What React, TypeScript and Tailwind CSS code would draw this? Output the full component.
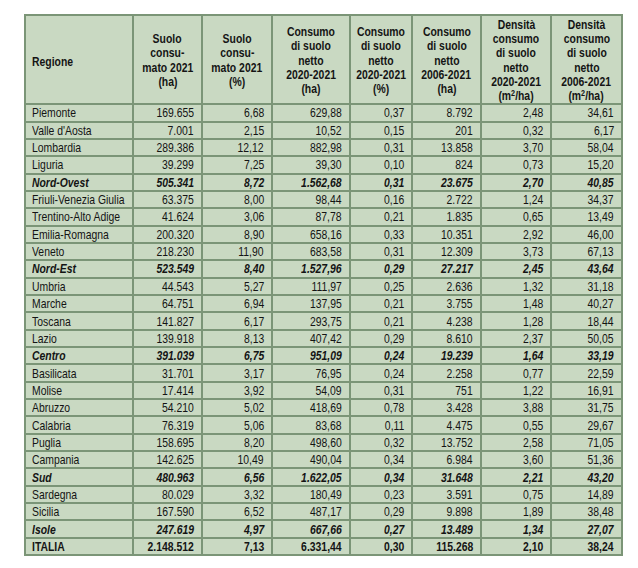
import React from "react";

type Row = { name: string; v: string[]; kind?: "macro" | "total" };

const rows: Row[] = [
  { name: "Piemonte", v: ["169.655", "6,68", "629,88", "0,37", "8.792", "2,48", "34,61"] },
  { name: "Valle d'Aosta", v: ["7.001", "2,15", "10,52", "0,15", "201", "0,32", "6,17"] },
  { name: "Lombardia", v: ["289.386", "12,12", "882,98", "0,31", "13.858", "3,70", "58,04"] },
  { name: "Liguria", v: ["39.299", "7,25", "39,30", "0,10", "824", "0,73", "15,20"] },
  { name: "Nord-Ovest", v: ["505.341", "8,72", "1.562,68", "0,31", "23.675", "2,70", "40,85"], kind: "macro" },
  { name: "Friuli-Venezia Giulia", v: ["63.375", "8,00", "98,44", "0,16", "2.722", "1,24", "34,37"] },
  { name: "Trentino-Alto Adige", v: ["41.624", "3,06", "87,78", "0,21", "1.835", "0,65", "13,49"] },
  { name: "Emilia-Romagna", v: ["200.320", "8,90", "658,16", "0,33", "10.351", "2,92", "46,00"] },
  { name: "Veneto", v: ["218.230", "11,90", "683,58", "0,31", "12.309", "3,73", "67,13"] },
  { name: "Nord-Est", v: ["523.549", "8,40", "1.527,96", "0,29", "27.217", "2,45", "43,64"], kind: "macro" },
  { name: "Umbria", v: ["44.543", "5,27", "111,97", "0,25", "2.636", "1,32", "31,18"] },
  { name: "Marche", v: ["64.751", "6,94", "137,95", "0,21", "3.755", "1,48", "40,27"] },
  { name: "Toscana", v: ["141.827", "6,17", "293,75", "0,21", "4.238", "1,28", "18,44"] },
  { name: "Lazio", v: ["139.918", "8,13", "407,42", "0,29", "8.610", "2,37", "50,05"] },
  { name: "Centro", v: ["391.039", "6,75", "951,09", "0,24", "19.239", "1,64", "33,19"], kind: "macro" },
  { name: "Basilicata", v: ["31.701", "3,17", "76,95", "0,24", "2.258", "0,77", "22,59"] },
  { name: "Molise", v: ["17.414", "3,92", "54,09", "0,31", "751", "1,22", "16,91"] },
  { name: "Abruzzo", v: ["54.210", "5,02", "418,69", "0,78", "3.428", "3,88", "31,75"] },
  { name: "Calabria", v: ["76.319", "5,06", "83,68", "0,11", "4.475", "0,55", "29,67"] },
  { name: "Puglia", v: ["158.695", "8,20", "498,60", "0,32", "13.752", "2,58", "71,05"] },
  { name: "Campania", v: ["142.625", "10,49", "490,04", "0,34", "6.984", "3,60", "51,36"] },
  { name: "Sud", v: ["480.963", "6,56", "1.622,05", "0,34", "31.648", "2,21", "43,20"], kind: "macro" },
  { name: "Sardegna", v: ["80.029", "3,32", "180,49", "0,23", "3.591", "0,75", "14,89"] },
  { name: "Sicilia", v: ["167.590", "6,52", "487,17", "0,29", "9.898", "1,89", "38,48"] },
  { name: "Isole", v: ["247.619", "4,97", "667,66", "0,27", "13.489", "1,34", "27,07"], kind: "macro" },
  { name: "ITALIA", v: ["2.148.512", "7,13", "6.331,44", "0,30", "115.268", "2,10", "38,24"], kind: "total" },
];

const sup = <span className="text-[9px] relative top-[-4px] leading-none">2</span>;

const headers: string[][] = [
  ["Suolo", "consu-", "mato 2021", "(ha)"],
  ["Suolo", "consu-", "mato 2021", "(%)"],
  ["Consumo", "di suolo", "netto", "2020-2021", "(ha)"],
  ["Consumo", "di suolo", "netto", "2020-2021", "(%)"],
  ["Consumo", "di suolo", "netto", "2006-2021", "(ha)"],
  ["Densità", "consumo", "di suolo", "netto", "2020-2021", "M2"],
  ["Densità", "consumo", "di suolo", "netto", "2006-2021", "M2"],
];

const widths = [108, 69, 70, 78, 62, 69, 70, 71];

export default function App() {
  return (
    <div
      className="w-[638px] h-[568px] bg-white text-[#141414] overflow-hidden"
      style={{ fontFamily: '"Liberation Sans", Arial, sans-serif' }}
    >
      <div className="pl-[24px] pt-[14px]">
        <table className="w-[597px] table-fixed border-collapse border-2 border-[#6c7d69] bg-[#c9d9c2] text-[13px] leading-[14px]">
          <colgroup>
            {widths.map((w, i) => (
              <col key={i} style={{ width: w }} />
            ))}
          </colgroup>
          <thead>
            <tr>
              <th className="h-[88px] border-2 border-[#7b9577] text-left font-bold pl-[6px] align-middle overflow-visible">
                <span className="inline-block origin-left scale-x-[0.8] pt-[4px]">Regione</span>
              </th>
              {headers.map((h, i) => (
                <th key={i} className="h-[88px] border-2 border-[#7b9577] text-center font-bold align-middle p-0 overflow-visible">
                  <div className="flex flex-col items-center pt-[2px]">
                    {h.map((line, j) => (
                      <span key={j} className="block whitespace-nowrap scale-x-[0.8] origin-center leading-[14.2px]">
                        {line === "M2" ? <>(m{sup}/ha)</> : line}
                      </span>
                    ))}
                  </div>
                </th>
              ))}
            </tr>
          </thead>
          <tbody>
            {rows.map((r) => {
              const st =
                r.kind === "macro" ? "font-bold italic" : r.kind === "total" ? "font-bold" : "";
              return (
                <tr key={r.name}>
                  <td className={`h-[17.35px] border-2 border-[#7b9577] p-0 pl-[6px] whitespace-nowrap overflow-visible ${st}`}>
                    <span className="inline-block origin-left scale-x-[0.8] pt-[1px]">{r.name}</span>
                  </td>
                  {r.v.map((v, i) => (
                    <td key={i} className={`h-[17.35px] border-2 border-[#7b9577] text-right p-0 pr-[7px] whitespace-nowrap overflow-visible ${st}`}>
                      <span className="inline-block origin-right scale-x-[0.8] pt-[1px]">{v}</span>
                    </td>
                  ))}
                </tr>
              );
            })}
          </tbody>
        </table>
      </div>
    </div>
  );
}
